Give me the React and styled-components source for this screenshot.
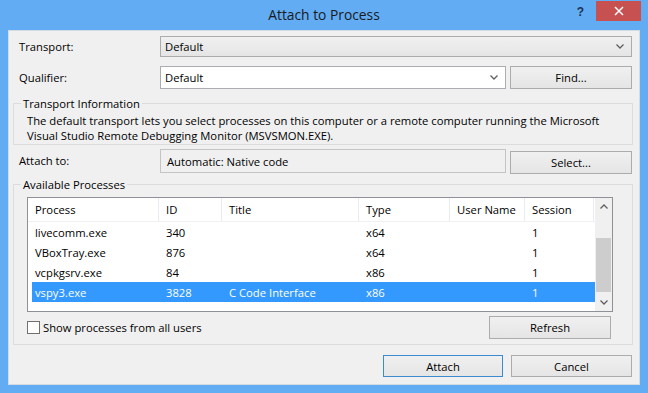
import React from 'react';
import styled, { createGlobalStyle } from 'styled-components';

const GlobalStyle = createGlobalStyle`
  * { box-sizing: border-box; }
  body {
    margin: 0;
    font-family: "Segoe UI", "Open Sans", "Liberation Sans", sans-serif;
    font-size: 11.25px;
    color: #000;
  }
`;

const Window = styled.div`
  width: 648px;
  height: 393px;
  background: #62acf4;
  display: flex;
  flex-direction: column;
`;

const TitleBar = styled.div`
  height: 30px;
  display: grid;
  grid-template-columns: 1fr auto 1fr;
  align-items: start;
`;

const Title = styled.div`
  grid-column: 2;
  font-size: 13.8px;
  line-height: 30px;
  color: #1a1a1a;
`;

const Controls = styled.div`
  justify-self: end;
  display: flex;
  align-items: flex-start;
  margin-right: 7px;
`;

const HelpGlyph = styled.span`
  font-family: "Liberation Sans", sans-serif;
  font-weight: bold;
  font-size: 12px;
  line-height: 12px;
  color: #1e3350;
  margin-top: 6px;
  margin-right: 12px;
`;

const CloseButton = styled.div`
  width: 45px;
  height: 20px;
  margin-top: 1px;
  background: #c75050;
  display: flex;
  align-items: center;
  justify-content: center;
`;

const Body = styled.div`
  flex: 1;
  margin: 0 8px 8px 8px;
  background: #f0f0f0;
  border: 1px solid #d3dae2;
  padding: 5px 6px 0 4px;
  display: flex;
  flex-direction: column;
`;

const Row = styled.div`
  display: flex;
  align-items: ${p => (p.$top ? 'flex-start' : 'center')};
  gap: 4px;
  height: ${p => p.$h}px;
  margin-top: ${p => p.$mt || 0}px;
  padding: 0 1px 0 6px;
`;

const Label = styled.div`
  width: 137px;
  line-height: ${p => p.$lh || 15}px;
`;

const Combo = styled.div`
  flex: ${p => (p.$grow ? 1 : 'none')};
  width: ${p => (p.$grow ? 'auto' : `${p.$w}px`)};
  height: ${p => p.$h}px;
  border: 1px solid ${p => (p.$editable ? '#abadb3' : '#acacac')};
  background: ${p => (p.$editable ? '#fff' : 'linear-gradient(#f0f0f0, #e5e5e5)')};
  display: flex;
  align-items: center;
  justify-content: space-between;
  padding: 0 7px 0 4px;
`;

const Field = styled.div`
  width: 346px;
  height: 24px;
  border: 1px solid #c4c4c4;
  background: #f0f0f0;
  display: flex;
  align-items: center;
  padding-left: 6px;
`;

const Button = styled.div`
  width: ${p => p.$w || 122}px;
  height: ${p => p.$h || 23}px;
  margin-top: ${p => p.$mt || 0}px;
  border: 1px solid ${p => (p.$default ? '#3d8ad3' : '#acacac')};
  background: linear-gradient(#f0f0f0, #e5e5e5);
  display: flex;
  align-items: center;
  justify-content: center;
`;

const Group = styled.fieldset`
  margin: ${p => p.$mt || 0}px 0 0 0;
  padding: 0;
  border: 1px solid #dcdcdc;
  min-width: 0;
`;

const Legend = styled.legend`
  margin-left: 7px;
  padding: 0 2px;
  line-height: 15px;
`;

const Description = styled.div`
  padding: 2px 12px 1px 13px;
  line-height: 15px;
`;

const GroupInner = styled.div`
  padding: 5px 19px 5px 13px;
`;

const List = styled.div`
  height: 115px;
  border: 1px solid #8e9298;
  background: #fff;
  display: flex;
`;

const ListMain = styled.div`
  flex: 1;
  display: flex;
  flex-direction: column;
`;

const HeaderRow = styled.div`
  display: flex;
  height: 24px;
  border-bottom: 1px solid #eef1f6;
`;

const HeaderCell = styled.div`
  width: ${p => p.$w}px;
  padding-left: 7px;
  border-right: 1px solid #e8ecf2;
  display: flex;
  align-items: center;
`;

const ItemRow = styled.div`
  display: flex;
  height: 20px;
  margin-left: 4px;
  background: ${p => (p.$selected ? '#3399ff' : 'transparent')};
  color: ${p => (p.$selected ? '#fff' : '#000')};
`;

const Cell = styled.div`
  width: ${p => p.$w}px;
  padding-left: ${p => p.$pl}px;
  display: flex;
  align-items: center;
  white-space: nowrap;
`;

const ScrollBar = styled.div`
  width: 17px;
  background: #f0f0f0;
  display: flex;
  flex-direction: column;
`;

const ScrollArrow = styled.div`
  height: 17px;
  display: flex;
  align-items: center;
  justify-content: center;
`;

const Track = styled.div`
  flex: 1;
  padding: 23px 1px 2px 1px;
`;

const Thumb = styled.div`
  height: 54px;
  background: #cdcdcd;
`;

const OptionsRow = styled.div`
  display: flex;
  align-items: center;
  justify-content: space-between;
  height: 23px;
  margin-top: 4px;
  padding-right: 2px;
`;

const CheckLabel = styled.label`
  display: flex;
  align-items: center;
  gap: 3px;
`;

const CheckBox = styled.span`
  width: 13px;
  height: 13px;
  border: 1px solid #707070;
  background: #fff;
`;

const Footer = styled.div`
  display: flex;
  justify-content: flex-end;
  gap: 8px;
  margin-top: 10px;
  padding-right: 1px;
`;

const Chevron = ({ up, color = '#606060' }) => (
  <svg width="8" height="5" viewBox="0 0 8 5">
    <polyline
      points={up ? '0.5,4.5 4,1 7.5,4.5' : '0.5,0.5 4,4 7.5,0.5'}
      fill="none"
      stroke={color}
      strokeWidth="1.3"
    />
  </svg>
);

const columns = [
  { name: 'Process', w: 131, key: 'process' },
  { name: 'ID', w: 63, key: 'id' },
  { name: 'Title', w: 137, key: 'title' },
  { name: 'Type', w: 91, key: 'type' },
  { name: 'User Name', w: 75, key: 'user' },
  { name: 'Session', w: 69, key: 'session' },
];

const processes = [
  { process: 'livecomm.exe', id: '340', title: '', type: 'x64', user: '', session: '1' },
  { process: 'VBoxTray.exe', id: '876', title: '', type: 'x64', user: '', session: '1' },
  { process: 'vcpkgsrv.exe', id: '84', title: '', type: 'x86', user: '', session: '1' },
  { process: 'vspy3.exe', id: '3828', title: 'C Code Interface', type: 'x86', user: '', session: '1', selected: true },
];

const App = () => {
  return (
    <>
      <GlobalStyle />
      <Window>
        <TitleBar>
          <Title>Attach to Process</Title>
          <Controls>
            <HelpGlyph>?</HelpGlyph>
            <CloseButton>
              <svg width="10" height="10" viewBox="0 0 10 10">
                <path d="M1 1 L9 9 M9 1 L1 9" stroke="#fff" strokeWidth="1.5" />
              </svg>
            </CloseButton>
          </Controls>
        </TitleBar>

        <Body>
          <Row $h={21}>
            <Label>Transport:</Label>
            <Combo $grow $h={21}>
              <span>Default</span>
              <Chevron />
            </Combo>
          </Row>

          <Row $h={23} $mt={9}>
            <Label>Qualifier:</Label>
            <Combo $editable $w={346} $h={23}>
              <span>Default</span>
              <Chevron />
            </Combo>
            <Button>Find...</Button>
          </Row>

          <Group $mt={7}>
            <Legend>Transport Information</Legend>
            <Description>
              The default transport lets you select processes on this computer or a remote computer running the Microsoft
              <br />
              Visual Studio Remote Debugging Monitor (MSVSMON.EXE).
            </Description>
          </Group>

          <Row $h={26} $mt={4} $top>
            <Label $lh={24}>Attach to:</Label>
            <Field>Automatic: Native code</Field>
            <Button $mt={2}>Select...</Button>
          </Row>

          <Group $mt={2}>
            <Legend>Available Processes</Legend>
            <GroupInner>
              <List>
                <ListMain>
                  <HeaderRow>
                    {columns.map(c => (
                      <HeaderCell key={c.key} $w={c.w}>
                        {c.name}
                      </HeaderCell>
                    ))}
                  </HeaderRow>
                  {processes.map(p => (
                    <ItemRow key={p.process} $selected={p.selected}>
                      {columns.map((c, i) => (
                        <Cell key={c.key} $w={i === 0 ? c.w - 4 : c.w} $pl={i === 0 ? 3 : 7}>
                          {p[c.key]}
                        </Cell>
                      ))}
                    </ItemRow>
                  ))}
                </ListMain>
                <ScrollBar>
                  <ScrollArrow>
                    <Chevron up />
                  </ScrollArrow>
                  <Track>
                    <Thumb />
                  </Track>
                  <ScrollArrow>
                    <Chevron />
                  </ScrollArrow>
                </ScrollBar>
              </List>

              <OptionsRow>
                <CheckLabel>
                  <CheckBox />
                  Show processes from all users
                </CheckLabel>
                <Button>Refresh</Button>
              </OptionsRow>
            </GroupInner>
          </Group>

          <Footer>
            <Button $default $w={120} $h={22}>Attach</Button>
            <Button $w={121} $h={22}>Cancel</Button>
          </Footer>
        </Body>
      </Window>
    </>
  );
};

export default App;
